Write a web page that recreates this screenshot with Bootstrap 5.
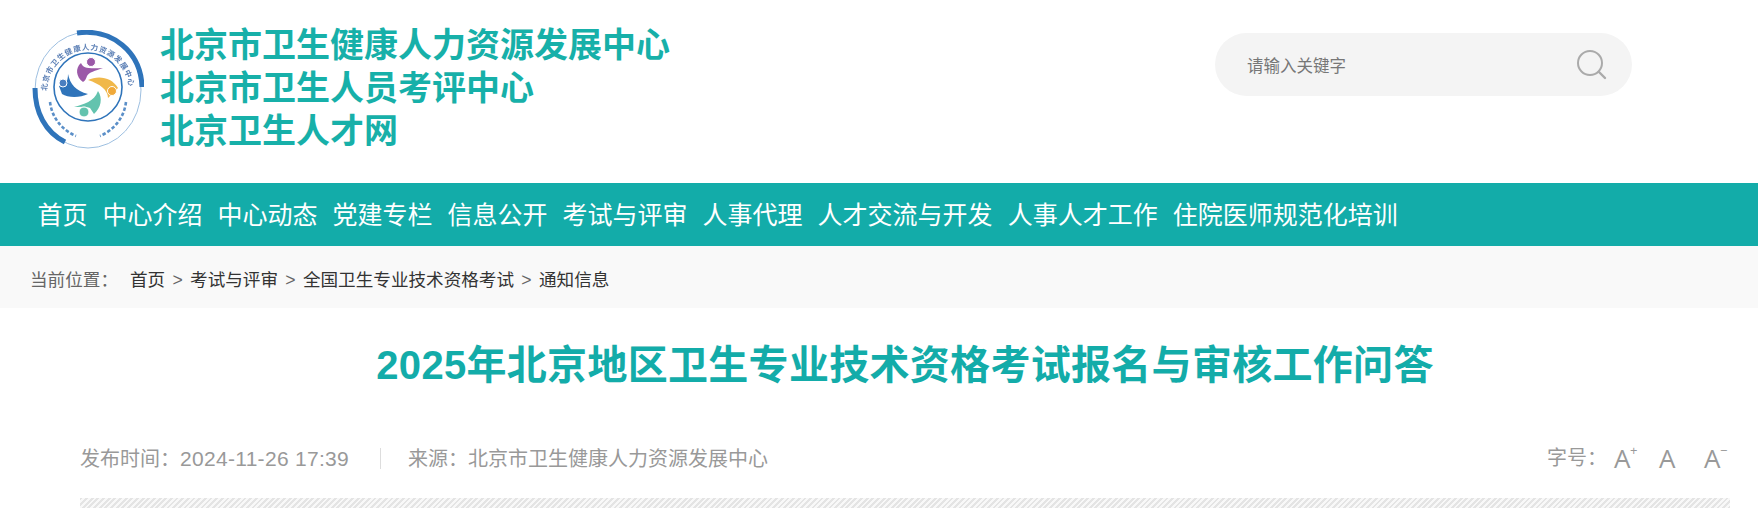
<!DOCTYPE html>
<html lang="zh-CN">
<head>
<meta charset="utf-8">
<title>2025年北京地区卫生专业技术资格考试报名与审核工作问答</title>
<link href="https://cdn.jsdelivr.net/npm/bootstrap@5.3.0/dist/css/bootstrap.min.css" rel="stylesheet">
<style>
body{font-family:"Liberation Sans","Noto Sans CJK SC",sans-serif;background:#fff;overflow:hidden}
.site-head{height:183px;padding:24px 126px 0 32px}
.site-logo{width:112px;height:122px;margin-top:6px;flex:none;filter:blur(.35px)}
.site-name{margin-left:16px;color:#17b0a9;font-size:34px;line-height:43px;font-weight:700;white-space:nowrap}
.search-pill{width:417px;height:63px;margin-top:9px;border-radius:32px;background:#f4f4f4;padding:0 24px 0 32px}
.search-pill span{font-size:16.5px;color:#777;padding-top:4px}
.main-nav{height:63px;background:#13aca9;padding-left:30px}
.main-nav .nav-link{color:#fff;font-size:25px;padding:2px 7.5px 0;line-height:61px}
.crumbs{height:62px;background:#f9f9f9;padding:6px 0 0 30px;font-size:17.6px;color:#666}
.crumbs a{color:#333;text-decoration:none}
.crumbs span{margin-right:12px}
.crumbs i{font-style:normal;margin:0 7.3px}
.doc-title{margin:0 28px 0 80px;padding-top:29px;height:135px;font-size:40px;line-height:56px;font-weight:700;color:#13aca9;letter-spacing:.3px}
.doc-meta{margin:0 28px 0 80px;font-size:20px;color:#999;height:55px}
.meta-date{font-size:21px;letter-spacing:.3px}
.meta-rule{width:1px;height:21px;background:#ddd;margin:0 27px 0 31px}
.size-label{margin-right:7px}
.size-a{font-size:26px;font-weight:400;color:#999;line-height:1;position:relative;width:45px;font-family:"Open Sans","Liberation Sans",sans-serif}
.size-a:last-child{width:26px}
.size-a sup{position:absolute;top:-1px;left:16px;font-size:13px;line-height:1}
.stripe-bar{margin:0 28px 0 80px;height:10px;background:repeating-linear-gradient(135deg,#e4e4e4 0 2px,#f8f8f8 2px 4px)}
</style>
</head>
<body>
<header class="site-head d-flex justify-content-between align-items-start">
  <div class="d-flex align-items-start">
    <svg class="site-logo" viewBox="0 0 112 122" role="img" aria-label="logo">
      <defs><path id="arcText" d="M15 61 A41 41 0 1 1 97 61"/></defs>
      <ellipse cx="56" cy="60" rx="53" ry="58" fill="none" stroke="#9dbfe0" stroke-width="1"/>
      <path d="M3 58 C3 82 13 102 33 112" fill="none" stroke="#2f74ba" stroke-width="5"/>
      <path d="M45 3 C80 -2 109 22 110 57" fill="none" stroke="#2f74ba" stroke-width="5"/>
      <text font-size="7.5" font-weight="700" fill="#5b7fb5" font-family="'Noto Sans CJK SC',serif"><textPath href="#arcText" textLength="124">北京市卫生健康人力资源发展中心</textPath></text>
      <circle cx="56" cy="57" r="34" fill="none" stroke="#2f74ba" stroke-width="1.6"/>
      <path d="M51 52 C44 47 43 38 49 33 C51 38 56 39 71 38 C63 41 57 42 55 46 C54 49 53 51 51 52Z" fill="#9b59a8"/>
      <circle cx="59" cy="32" r="4.5" fill="#9b59a8" stroke="#fff"/>
      <path d="M56 50 C66 45 80 47 86 58 L76 68 C76 60 68 54 56 50Z" fill="#f0b84a"/>
      <circle cx="80" cy="61" r="4.5" fill="#f0a93a" stroke="#fff"/>
      <path d="M66 61 C71 68 69 78 62 84 L58 78 C54 76 48 77 42 77 C52 74 62 72 66 61Z" fill="#63c3ae"/>
      <circle cx="52" cy="82" r="5" fill="#63c3ae" stroke="#fff"/>
      <path d="M36 44 C38 54 44 61 56 64 C48 68 36 68 30 64 L27 56 C33 56 36 52 36 44Z" fill="#2f74ba"/>
      <circle cx="31" cy="53" r="4" fill="#4a7fc0" stroke="#fff"/>
      <g fill="none" stroke="#5b8fc8" stroke-width="2.6" stroke-dasharray="3.5 2">
        <path d="M18 72 C20 88 30 100 44 106"/>
        <path d="M94 72 C92 88 82 100 68 106"/>
      </g>
    </svg>
    <div class="site-name d-flex flex-column">
      <span>北京市卫生健康人力资源发展中心</span>
      <span>北京市卫生人员考评中心</span>
      <span>北京卫生人才网</span>
    </div>
  </div>
  <div class="search-pill d-flex align-items-center justify-content-between">
    <span>请输入关键字</span>
    <svg width="32" height="32" viewBox="0 0 32 32"><circle cx="14" cy="14" r="12" fill="none" stroke="#aaa" stroke-width="2"/><path d="M23 23l6 6" stroke="#aaa" stroke-width="2.4" stroke-linecap="round"/></svg>
  </div>
</header>
<nav class="main-nav d-flex align-items-center">
  <ul class="nav flex-nowrap">
    <li class="nav-item"><a class="nav-link" href="#">首页</a></li>
    <li class="nav-item"><a class="nav-link" href="#">中心介绍</a></li>
    <li class="nav-item"><a class="nav-link" href="#">中心动态</a></li>
    <li class="nav-item"><a class="nav-link" href="#">党建专栏</a></li>
    <li class="nav-item"><a class="nav-link" href="#">信息公开</a></li>
    <li class="nav-item"><a class="nav-link" href="#">考试与评审</a></li>
    <li class="nav-item"><a class="nav-link" href="#">人事代理</a></li>
    <li class="nav-item"><a class="nav-link" href="#">人才交流与开发</a></li>
    <li class="nav-item"><a class="nav-link" href="#">人事人才工作</a></li>
    <li class="nav-item"><a class="nav-link" href="#">住院医师规范化培训</a></li>
  </ul>
</nav>
<div class="crumbs d-flex align-items-center">
  <span>当前位置：</span><a href="#">首页</a><i>&gt;</i><a href="#">考试与评审</a><i>&gt;</i><a href="#">全国卫生专业技术资格考试</a><i>&gt;</i><a href="#">通知信息</a>
</div>
<h1 class="doc-title text-center">2025年北京地区卫生专业技术资格考试报名与审核工作问答</h1>
<div class="doc-meta d-flex justify-content-between align-items-start">
  <div class="d-flex align-items-center">
    <span>发布时间：<span class="meta-date">2024-11-26 17:39</span></span>
    <span class="meta-rule"></span>
    <span>来源：北京市卫生健康人力资源发展中心</span>
  </div>
  <div class="d-flex align-items-center">
    <span class="size-label">字号：</span>
    <span class="size-a">A<sup>+</sup></span>
    <span class="size-a">A</span>
    <span class="size-a">A<sup>−</sup></span>
  </div>
</div>
<div class="stripe-bar"></div>
</body>
</html>
